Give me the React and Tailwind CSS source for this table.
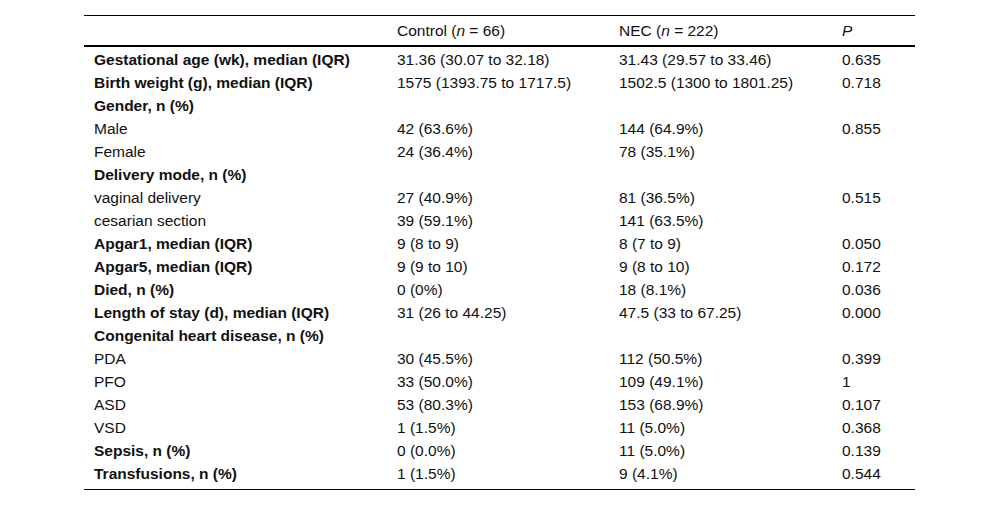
import React from "react";

const rows = [
  { l: "Gestational age (wk), median (IQR)", b: true, c: "31.36 (30.07 to 32.18)", n: "31.43 (29.57 to 33.46)", p: "0.635" },
  { l: "Birth weight (g), median (IQR)", b: true, c: "1575 (1393.75 to 1717.5)", n: "1502.5 (1300 to 1801.25)", p: "0.718" },
  { l: "Gender, n (%)", b: true, c: "", n: "", p: "" },
  { l: "Male", c: "42 (63.6%)", n: "144 (64.9%)", p: "0.855" },
  { l: "Female", c: "24 (36.4%)", n: "78 (35.1%)", p: "" },
  { l: "Delivery mode, n (%)", b: true, c: "", n: "", p: "" },
  { l: "vaginal delivery", c: "27 (40.9%)", n: "81 (36.5%)", p: "0.515" },
  { l: "cesarian section", c: "39 (59.1%)", n: "141 (63.5%)", p: "" },
  { l: "Apgar1, median (IQR)", b: true, c: "9 (8 to 9)", n: "8 (7 to 9)", p: "0.050" },
  { l: "Apgar5, median (IQR)", b: true, c: "9 (9 to 10)", n: "9 (8 to 10)", p: "0.172" },
  { l: "Died, n (%)", b: true, c: "0 (0%)", n: "18 (8.1%)", p: "0.036" },
  { l: "Length of stay (d), median (IQR)", b: true, c: "31 (26 to 44.25)", n: "47.5 (33 to 67.25)", p: "0.000" },
  { l: "Congenital heart disease, n (%)", b: true, c: "", n: "", p: "" },
  { l: "PDA", c: "30 (45.5%)", n: "112 (50.5%)", p: "0.399" },
  { l: "PFO", c: "33 (50.0%)", n: "109 (49.1%)", p: "1" },
  { l: "ASD", c: "53 (80.3%)", n: "153 (68.9%)", p: "0.107" },
  { l: "VSD", c: "1 (1.5%)", n: "11 (5.0%)", p: "0.368" },
  { l: "Sepsis, n (%)", b: true, c: "0 (0.0%)", n: "11 (5.0%)", p: "0.139" },
  { l: "Transfusions, n (%)", b: true, c: "1 (1.5%)", n: "9 (4.1%)", p: "0.544" },
];

const cols = "grid grid-cols-[303px_222px_223px_83px]";

export default function App() {
  return (
    <div className="w-[1000px] h-[507px] bg-white pt-[15px] pl-[84px] text-[15.5px] text-[#111]" style={{ fontFamily: '"Liberation Sans", Arial, sans-serif' }}>
      <div className="w-[831px] border-t border-black border-b">
        <div className={`${cols} h-[31px] items-center pt-[1px] border-b-2 border-black`}>
          <div className="pl-[10px]"></div>
          <div className="pl-[10px]">Control (<i>n</i> = 66)</div>
          <div className="pl-[10px]">NEC (<i>n</i> = 222)</div>
          <div className="pl-[10px]"><i>P</i></div>
        </div>
        <div className="flex flex-col pt-[1px] pb-[4px]">
          {rows.map((r, i) => (
            <div key={i} className={`${cols} h-[23px] items-center`}>
              <div className={`pl-[10px] whitespace-nowrap ${r.b ? "font-bold" : ""}`}>{r.l}</div>
              <div className="pl-[10px] whitespace-nowrap">{r.c}</div>
              <div className="pl-[10px] whitespace-nowrap">{r.n}</div>
              <div className="pl-[10px] whitespace-nowrap">{r.p}</div>
            </div>
          ))}
        </div>
      </div>
    </div>
  );
}
